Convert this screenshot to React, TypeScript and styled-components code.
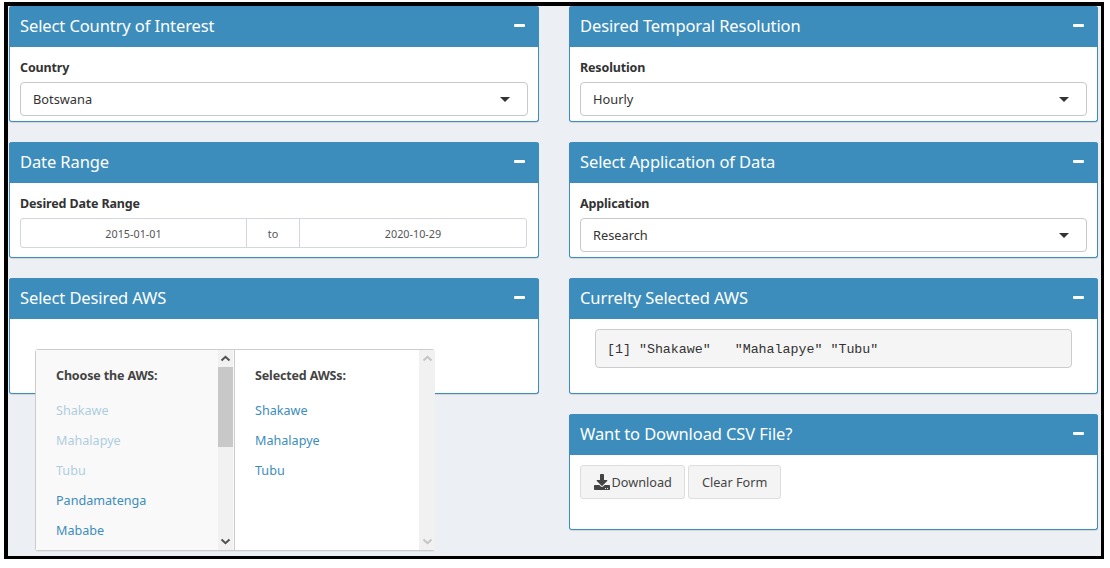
import { FaDownload } from "react-icons/fa"
import styled, { createGlobalStyle } from "styled-components"

const FONT = `"Noto Sans", "Open Sans", Arial, sans-serif`

const available = ["Shakawe", "Mahalapye", "Tubu", "Pandamatenga", "Mababe"]
const selected = ["Shakawe", "Mahalapye", "Tubu"]

const GlobalStyle = createGlobalStyle`
	html, body {
		margin: 0;
		background: #fff;
	}
	* {
		box-sizing: border-box;
	}
`

function Box({ title, children }: { title: string, children: React.ReactNode }) {
	return (
		<Card>
			<CardHeader>
				<CardTitle>{title}</CardTitle>
				<Collapse />
			</CardHeader>
			<CardBody>{children}</CardBody>
		</Card>
	)
}

function SelectField({ label, value }: { label: string, value: string }) {
	return (
		<>
			<FieldLabel>{label}</FieldLabel>
			<SelectBox>
				{value}
				<Caret />
			</SelectBox>
		</>
	)
}

function Chevron({ up, faded }: { up?: boolean, faded?: boolean }) {
	return (
		<svg width="11" height="7" viewBox="0 0 11 7">
			<path
				d={up ? "M1.5 5.5 L5.5 1.8 L9.5 5.5" : "M1.5 1.5 L5.5 5.2 L9.5 1.5"}
				fill="none"
				stroke={faded ? "#c4c4c4" : "#505050"}
				strokeWidth="2"
			/>
		</svg>
	)
}

function Scrollbar({ faded }: { faded?: boolean }) {
	return (
		<ScrollTrack $faded={faded}>
			<ScrollArrow><Chevron up faded={faded} /></ScrollArrow>
			<ScrollMiddle>{!faded && <ScrollThumb />}</ScrollMiddle>
			<ScrollArrow><Chevron faded={faded} /></ScrollArrow>
		</ScrollTrack>
	)
}

export default function App() {
	return (
		<>
			<GlobalStyle />
			<Frame>
				<Column>
					<Box title="Select Country of Interest">
						<SelectField label="Country" value="Botswana" />
					</Box>
					<Box title="Date Range">
						<FieldLabel>Desired Date Range</FieldLabel>
						<DateRange>
							<DateCell>2015-01-01</DateCell>
							<DateTo>to</DateTo>
							<DateCell>2020-10-29</DateCell>
						</DateRange>
					</Box>
					<Box title="Select Desired AWS">
						<MultiSelect>
							<ListPane $shaded>
								<ListColumn>
									<ListHeading>Choose the AWS:</ListHeading>
									{available.map((name, i) => (
										<ListItem key={name} $picked={i < 3}>{name}</ListItem>
									))}
								</ListColumn>
								<Scrollbar />
							</ListPane>
							<ListPane>
								<ListColumn>
									<ListHeading>Selected AWSs:</ListHeading>
									{selected.map(name => (
										<ListItem key={name}>{name}</ListItem>
									))}
								</ListColumn>
								<Scrollbar faded />
							</ListPane>
						</MultiSelect>
					</Box>
				</Column>
				<Column>
					<Box title="Desired Temporal Resolution">
						<SelectField label="Resolution" value="Hourly" />
					</Box>
					<Box title="Select Application of Data">
						<SelectField label="Application" value="Research" />
					</Box>
					<Box title="Currelty Selected AWS">
						<Output>[1] "Shakawe"   "Mahalapye" "Tubu"</Output>
					</Box>
					<Box title="Want to Download CSV File?">
						<ButtonRow>
							<ActionButton><FaDownload size={16} />Download</ActionButton>
							<ActionButton>Clear Form</ActionButton>
						</ButtonRow>
					</Box>
				</Column>
			</Frame>
		</>
	)
}

const Frame = styled.div`
	display: grid;
	grid-template-columns: 530px 529px;
	column-gap: 30px;
	align-content: start;
	width: 1100px;
	height: 557px;
	margin: 2px 0 0 4px;
	padding: 0 5px 0 1px;
	background: #ecf0f5;
	border: solid #000;
	border-width: 4px 3px 3px 4px;
	font-family: ${FONT};
	overflow: hidden;
`

const Column = styled.div`
	display: flex;
	flex-direction: column;
	gap: 20px;
`

const Card = styled.section`
	height: 116px;
	background: #fff;
	border: 1px solid #3c8dbc;
	border-top: 0;
	border-radius: 3px;
	box-shadow: 0 1px 1px rgba(0, 0, 0, 0.1);
`

const CardHeader = styled.header`
	display: flex;
	align-items: center;
	justify-content: space-between;
	height: 41px;
	margin: 0 -1px;
	padding: 0 14px 2px 11px;
	background: #3c8dbc;
	border-radius: 3px 3px 0 0;
`

const CardTitle = styled.h3`
	margin: 0;
	font-size: 16.5px;
	font-weight: 400;
	letter-spacing: -0.1px;
	color: #fff;
`

const Collapse = styled.span`
	width: 11px;
	height: 3px;
	margin-bottom: 1px;
	background: #fff;
	border-radius: 1px;
`

const CardBody = styled.div`
	padding: 10px;
`

const FieldLabel = styled.div`
	height: 22px;
	margin-bottom: 3px;
	font-size: 12.5px;
	line-height: 22px;
	font-weight: 700;
	letter-spacing: -0.15px;
	color: #333;
`

const SelectBox = styled.div`
	display: flex;
	align-items: center;
	justify-content: space-between;
	height: 34px;
	padding: 0 17px 0 12px;
	background: #fff;
	border: 1px solid #c8c8c8;
	border-radius: 4px;
	font-size: 12.8px;
	color: #333;
`

const Caret = styled.span`
	width: 0;
	height: 0;
	border-top: 5px solid #333;
	border-left: 5.5px solid transparent;
	border-right: 5.5px solid transparent;
`

const DateRange = styled.div`
	display: grid;
	grid-template-columns: 225px 54px 1fr;
	height: 30px;
	margin-right: 1px;
	border: 1px solid #d2d6de;
	border-radius: 3px;
	font-size: 10.8px;
	color: #555;
`

const DateCell = styled.div`
	display: flex;
	align-items: center;
	justify-content: center;
`

const DateTo = styled(DateCell)`
	border: solid #d2d6de;
	border-width: 0 1px;
`

const MultiSelect = styled.div`
	display: grid;
	grid-template-columns: 199px 200px;
	width: 400px;
	height: 202px;
	margin: 20px 0 0 15px;
	background: #fff;
	border: 1px solid #ccc;
	border-radius: 3px;
	box-shadow: 0 1px 1px rgba(0, 0, 0, 0.05);
`

const ListPane = styled.div<{ $shaded?: boolean }>`
	display: flex;
	min-height: 0;
	padding-right: ${props => (props.$shaded ? "1px" : "0")};
	background: ${props => (props.$shaded ? "#f9f9f9" : "#fff")};
	border-right: ${props => (props.$shaded ? "1px solid #ccc" : "0")};
`

const ListColumn = styled.div`
	flex: 1;
	padding: 15px 20px 0;
`

const ListHeading = styled.div`
	height: 22px;
	margin-bottom: 9px;
	font-size: 12.5px;
	line-height: 22px;
	font-weight: 700;
	letter-spacing: -0.15px;
	color: #444;
`

const ListItem = styled.div<{ $picked?: boolean }>`
	height: 30px;
	font-size: 12.6px;
	line-height: 30px;
	color: #3c8dbc;
	opacity: ${props => (props.$picked ? 0.4 : 1)};
`

const ScrollTrack = styled.div<{ $faded?: boolean }>`
	display: flex;
	flex-direction: column;
	width: ${props => (props.$faded ? "16px" : "15px")};
	background: #f1f1f1;
`

const ScrollArrow = styled.div`
	display: flex;
	align-items: center;
	justify-content: center;
	height: 17px;
	flex: none;
`

const ScrollMiddle = styled.div`
	flex: 1;
`

const ScrollThumb = styled.div`
	height: 80px;
	background: #c8c8c8;
`

const Output = styled.pre`
	height: 39px;
	margin: 0 15px;
	padding: 1px 11px 0;
	background: #f5f5f5;
	border: 1px solid #ccc;
	border-radius: 4px;
	font-family: "Liberation Mono", monospace;
	font-size: 13.3px;
	line-height: 37px;
	color: #333;
`

const ButtonRow = styled.div`
	display: flex;
	gap: 3px;
`

const ActionButton = styled.button`
	display: flex;
	align-items: center;
	gap: 2px;
	height: 34px;
	padding: 0 12.5px;
	background: #f4f4f4;
	border: 1px solid #ddd;
	border-radius: 3px;
	font-family: ${FONT};
	font-size: 12.7px;
	color: #444;
`
